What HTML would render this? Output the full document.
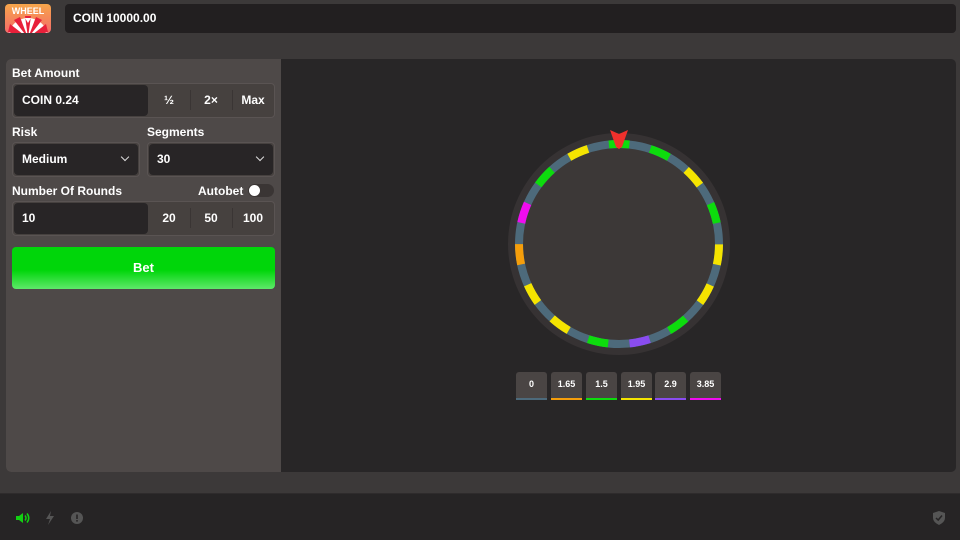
<!DOCTYPE html>
<html><head><meta charset="utf-8"><style>
*{box-sizing:border-box;margin:0;padding:0}
body{width:960px;height:540px;background:#3c3939;font-family:"Liberation Sans",sans-serif;color:#fff;position:relative;overflow:hidden;font-weight:bold}
.abs{position:absolute}
.coin{left:65px;top:4px;width:891px;height:29px;background:#221f20;border-radius:4px;font-size:12px;line-height:29px;padding-left:8px}
.panel{left:6px;top:59px;width:950px;height:413px;border-radius:5px;overflow:hidden;background:#282627}
.left{left:0;top:0;width:275px;height:413px;background:#4e4948}
.lbl{font-size:12px}
.grp{background:#46413f;border-radius:4px;border:1px solid #5a5453}
.inp{background:#282526;border-radius:4px;font-size:12px;line-height:30px;padding-left:8px}
.b{font-size:12px;text-align:center;line-height:31px}
.sep{width:1px;height:20px;background:#3a3534}
.chev{right:10px;top:10px;width:6px;height:6px;border-right:1.5px solid #ddd;border-bottom:1.5px solid #ddd;transform:rotate(45deg)}
.chip{top:313px;width:31px;height:28px;background:#4a4544;border-radius:3px;font-size:9px;text-align:center;line-height:25px}
.chip i{position:absolute;left:0;bottom:0;width:100%;height:2px}
.foot{left:0;top:493px;width:960px;height:47px;background:#262425;border-top:1px solid #2e2b2c}
</style></head><body>
<div class="abs" style="left:5px;top:4px;width:46px;height:29px;border-radius:4px;overflow:hidden;background:linear-gradient(#f7a64a,#f36a6a)">
<div class="abs" style="left:0;top:2px;width:46px;text-align:center;font-size:9px;color:#fff">WHEEL</div>
<svg class="abs" style="left:0;top:12px" width="46" height="17" viewBox="0 0 46 17">
<circle cx="23" cy="22" r="20" fill="#fff"/>
<g fill="#e8203a"><path d="M23 22L3 16L5 8Z"/><path d="M23 22L9 4L15 1Z"/><path d="M23 22L20 0L26 0Z"/><path d="M23 22L31 1L37 4Z"/><path d="M23 22L41 8L43 16Z"/></g>
<path d="M20 2L26 2L23 7Z" fill="#fff"/></svg></div>
<div class="abs coin">COIN 10000.00</div>
<div class="abs panel">
 <div class="abs left">
  <div class="abs lbl" style="left:6px;top:7px">Bet Amount</div>
  <div class="abs grp" style="left:6px;top:24px;width:263px;height:35px"></div>
  <div class="abs inp" style="left:8px;top:26px;width:134px;height:31px">COIN 0.24</div>
  <div class="abs b" style="left:143px;top:26px;width:40px">½</div>
  <div class="abs sep" style="left:184px;top:31px"></div>
  <div class="abs b" style="left:185px;top:26px;width:40px">2×</div>
  <div class="abs sep" style="left:226px;top:31px"></div>
  <div class="abs b" style="left:227px;top:26px;width:40px">Max</div>
  <div class="abs lbl" style="left:6px;top:66px">Risk</div>
  <div class="abs lbl" style="left:141px;top:66px">Segments</div>
  <div class="abs grp" style="left:6px;top:83px;width:128px;height:35px"></div>
  <div class="abs inp" style="left:8px;top:85px;width:124px;height:31px">Medium<div class="abs chev"></div></div>
  <div class="abs grp" style="left:141px;top:83px;width:128px;height:35px"></div>
  <div class="abs inp" style="left:143px;top:85px;width:124px;height:31px">30<div class="abs chev"></div></div>
  <div class="abs lbl" style="left:6px;top:125px">Number Of Rounds</div>
  <div class="abs lbl" style="left:192px;top:125px">Autobet</div>
  <div class="abs" style="left:242px;top:125px;width:26px;height:13px;border-radius:7px;background:#3a3534"><div class="abs" style="left:1px;top:1px;width:11px;height:11px;border-radius:50%;background:#fff"></div></div>
  <div class="abs grp" style="left:6px;top:142px;width:263px;height:35px"></div>
  <div class="abs inp" style="left:8px;top:144px;width:134px;height:31px">10</div>
  <div class="abs b" style="left:143px;top:144px;width:40px">20</div>
  <div class="abs sep" style="left:184px;top:149px"></div>
  <div class="abs b" style="left:185px;top:144px;width:40px">50</div>
  <div class="abs sep" style="left:226px;top:149px"></div>
  <div class="abs b" style="left:227px;top:144px;width:40px">100</div>
  <div class="abs" style="left:6px;top:188px;width:263px;height:42px;border-radius:4px;background:linear-gradient(#00d60a 55%,#5ee86a);font-size:13px;text-align:center;line-height:42px">Bet</div>
 </div>
 <svg class="abs" style="left:0;top:0" width="950" height="413">
  <circle cx="613" cy="185" r="111" fill="#363233"/>
  <circle cx="613" cy="185" r="97" fill="#3c3837"/>
  <circle cx="613" cy="185" r="100" fill="none" stroke="#4d6a7b" stroke-width="8"/>
  <g fill="none" stroke-width="8" stroke-dasharray="20.5 607.8">
   <circle cx="613" cy="185" r="100" stroke="#0ddc0d" transform="rotate(-95.8 613 185)"/>
   <circle cx="613" cy="185" r="100" stroke="#0ddc0d" transform="rotate(-71.8 613 185)"/>
   <circle cx="613" cy="185" r="100" stroke="#f5e400" transform="rotate(-47.8 613 185)"/>
   <circle cx="613" cy="185" r="100" stroke="#0ddc0d" transform="rotate(-23.8 613 185)"/>
   <circle cx="613" cy="185" r="100" stroke="#f5e400" transform="rotate(0.2 613 185)"/>
   <circle cx="613" cy="185" r="100" stroke="#f5e400" transform="rotate(24.2 613 185)"/>
   <circle cx="613" cy="185" r="100" stroke="#0ddc0d" transform="rotate(48.2 613 185)"/>
   <circle cx="613" cy="185" r="100" stroke="#8a4cf0" transform="rotate(72.2 613 185)"/>
   <circle cx="613" cy="185" r="100" stroke="#0ddc0d" transform="rotate(96.2 613 185)"/>
   <circle cx="613" cy="185" r="100" stroke="#f5e400" transform="rotate(120.2 613 185)"/>
   <circle cx="613" cy="185" r="100" stroke="#f5e400" transform="rotate(144.2 613 185)"/>
   <circle cx="613" cy="185" r="100" stroke="#f59e0b" transform="rotate(168.2 613 185)"/>
   <circle cx="613" cy="185" r="100" stroke="#f00cf0" transform="rotate(192.2 613 185)"/>
   <circle cx="613" cy="185" r="100" stroke="#0ddc0d" transform="rotate(216.2 613 185)"/>
   <circle cx="613" cy="185" r="100" stroke="#f5e400" transform="rotate(240.2 613 185)"/>
  </g>
  <path d="M604 71L613 75L622 71L616 88L613 90L610 88Z" fill="#f0302c"/>
 </svg>
 <div class="abs chip" style="left:510px">0<i style="background:#4d6a7b"></i></div>
 <div class="abs chip" style="left:545px">1.65<i style="background:#f59e0b"></i></div>
 <div class="abs chip" style="left:580px">1.5<i style="background:#0ddc0d"></i></div>
 <div class="abs chip" style="left:615px">1.95<i style="background:#f5e400"></i></div>
 <div class="abs chip" style="left:649px">2.9<i style="background:#8a4cf0"></i></div>
 <div class="abs chip" style="left:684px">3.85<i style="background:#f00cf0"></i></div>
</div>
<div class="abs foot">
 <svg class="abs" style="left:15px;top:18px" width="16" height="12" viewBox="0 0 16 12"><path d="M1 4H4L8 1V11L4 8H1Z" fill="#12d012"/><path d="M10 3.5Q12 6 10 8.5M12 1.5Q15.5 6 12 10.5" stroke="#12d012" stroke-width="1.5" fill="none"/></svg>
 <svg class="abs" style="left:45px;top:17px" width="10" height="14" viewBox="0 0 10 14"><path d="M6 0L1 8H5L3 14L9 5H5Z" fill="#555"/></svg>
 <svg class="abs" style="left:71px;top:18px" width="12" height="12" viewBox="0 0 12 12"><circle cx="6" cy="6" r="6" fill="#555"/><rect x="5.2" y="2.5" width="1.6" height="4.5" fill="#262425"/><rect x="5.2" y="8" width="1.6" height="1.6" fill="#262425"/></svg>
 <svg class="abs" style="left:933px;top:17px" width="12" height="14" viewBox="0 0 12 14"><path d="M6 0L12 2V7Q12 11 6 14Q0 11 0 7V2Z" fill="#555"/><path d="M3 7L5.2 9L9 4.5" stroke="#262425" stroke-width="1.5" fill="none"/></svg>
</div>
</body></html>
